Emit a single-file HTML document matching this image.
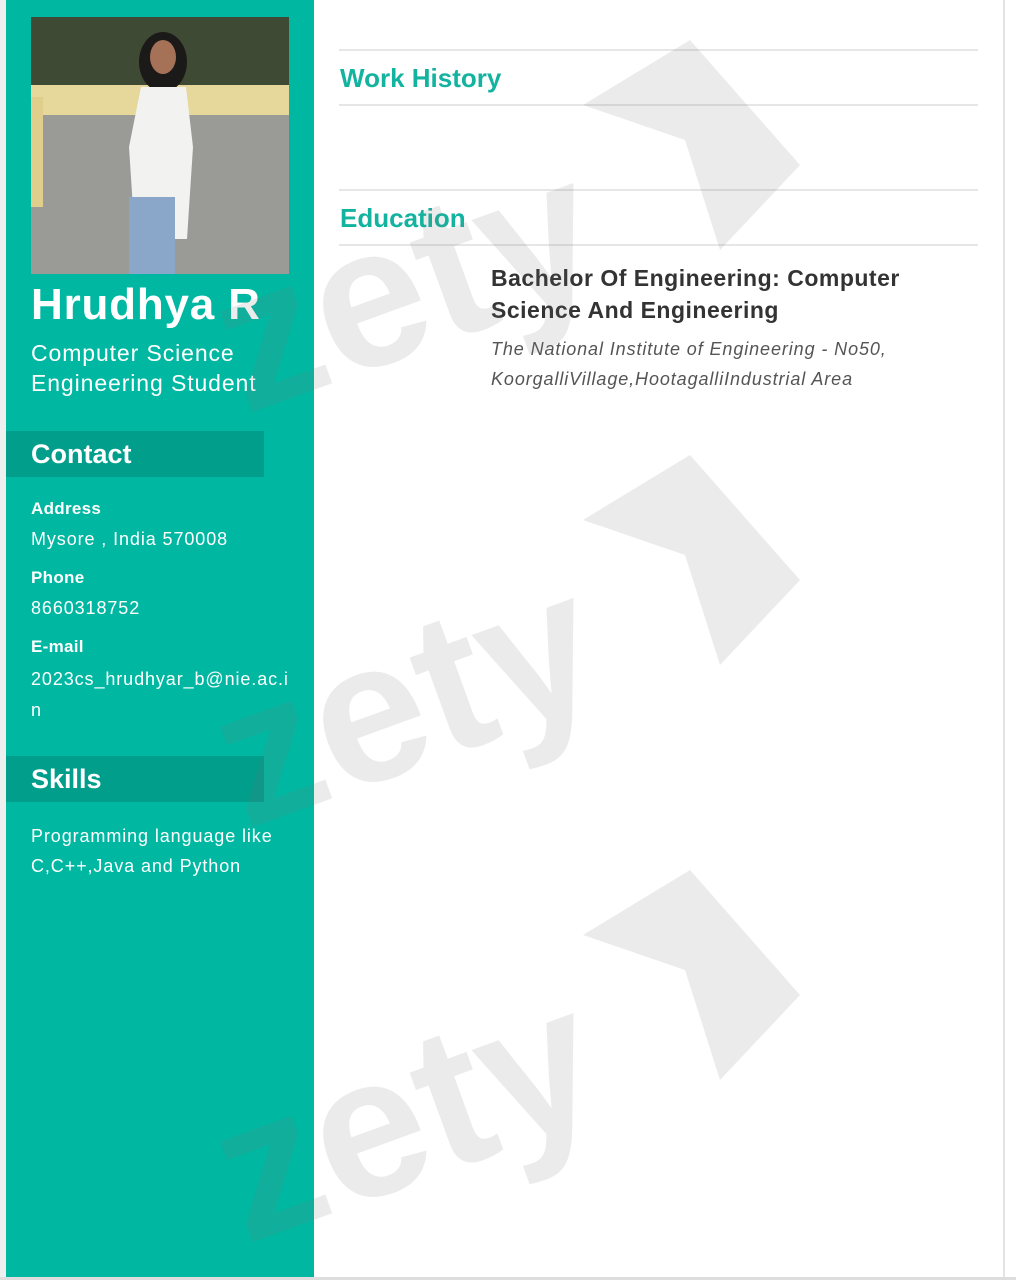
<!DOCTYPE html>
<html><head><style>
body{margin:0;width:1016px;height:1280px;background:#fff;position:relative;overflow:hidden;font-family:"Liberation Sans",sans-serif}
.side{position:absolute;left:6px;top:0;width:308px;height:1280px;background:#00b8a2}
.edge{position:absolute;left:0;top:0;width:6px;height:1280px;background:#eef0ef}
.redge{position:absolute;left:1003px;top:0;width:2px;height:1280px;background:#e4e4e4}
.bedge{position:absolute;left:0;top:1277px;width:1016px;height:3px;background:#ddd}
.t{position:absolute;color:#fff;white-space:nowrap}
.r{letter-spacing:0.9px}
.bar{position:absolute;left:6px;width:258px;height:46px;background:#009e8b}
.line{position:absolute;left:339px;width:639px;height:2px;background:#e6e6e6}
.h{position:absolute;left:340px;color:#14b3a0;font-weight:bold;font-size:26px;letter-spacing:0px}
</style></head><body>
<div class="edge"></div><div class="side"></div><div class="redge"></div><div class="bedge"></div>
<svg style="position:absolute;left:31px;top:17px" width="258" height="257" viewBox="0 0 258 257">
<rect width="258" height="257" fill="#8a8c88"/>
<rect width="258" height="80" fill="#3e4a34"/>
<rect y="68" width="258" height="30" fill="#e6d79a"/>
<rect y="98" width="258" height="159" fill="#9a9a96"/>
<rect x="0" y="80" width="12" height="110" fill="#e0cf8c"/>
<ellipse cx="132" cy="45" rx="24" ry="30" fill="#1c1a18"/>
<ellipse cx="132" cy="40" rx="13" ry="17" fill="#a57258"/>
<path d="M110 70 L155 70 L162 130 L156 222 L104 222 L98 130Z" fill="#f2f2f0"/>
<rect x="98" y="180" width="46" height="77" fill="#8aa6c8"/>
</svg>
<div class="t" style="left:31px;top:280px;font-size:44px;font-weight:bold;letter-spacing:0.8px">Hrudhya R</div>
<div class="t r" style="left:31px;top:338px;font-size:23px;line-height:30px">Computer Science<br>Engineering Student</div>
<div class="bar" style="top:431px"></div>
<div class="t" style="left:31px;top:439px;font-size:27px;font-weight:bold">Contact</div>
<div class="t" style="left:31px;top:499px;font-size:17px;font-weight:bold;letter-spacing:0.3px">Address</div>
<div class="t r" style="left:31px;top:529px;font-size:18px">Mysore , India 570008</div>
<div class="t" style="left:31px;top:568px;font-size:17px;font-weight:bold;letter-spacing:0.3px">Phone</div>
<div class="t r" style="left:31px;top:598px;font-size:18px">8660318752</div>
<div class="t" style="left:31px;top:637px;font-size:17px;font-weight:bold;letter-spacing:0.3px">E-mail</div>
<div class="t r" style="left:31px;top:664px;font-size:18px;line-height:31px">2023cs_hrudhyar_b@nie.ac.i<br>n</div>
<div class="bar" style="top:756px"></div>
<div class="t" style="left:31px;top:764px;font-size:27px;font-weight:bold">Skills</div>
<div class="t r" style="left:31px;top:821px;font-size:18px;line-height:30px">Programming language like<br>C,C++,Java and Python</div>
<div class="line" style="top:49px"></div>
<div class="h" style="top:63px">Work History</div>
<div class="line" style="top:104px"></div>
<div class="line" style="top:189px"></div>
<div class="h" style="top:203px">Education</div>
<div class="line" style="top:244px"></div>
<div style="position:absolute;left:491px;top:262px;font-size:23px;font-weight:bold;color:#333;line-height:32px;letter-spacing:0.5px">Bachelor Of Engineering: Computer<br>Science And Engineering</div>
<div style="position:absolute;left:491px;top:334px;font-size:18px;font-style:italic;color:#555;line-height:30px;letter-spacing:0.9px">The National Institute of Engineering - No50,<br>KoorgalliVillage,HootagalliIndustrial Area</div>
<svg style="position:absolute;left:0;top:0" width="1016" height="1280">
<g fill="rgba(110,110,110,0.14)">
<g id="w">
<polygon points="583,105 690,40 800,165 720,250 685,140"/>
<text x="0" y="0" transform="translate(245,415) rotate(-20)" font-family="Liberation Sans,sans-serif" font-weight="bold" font-size="200">zety</text>
</g>
<use href="#w" y="415"/>
<use href="#w" y="830"/>
</g>
</svg>
</body></html>
